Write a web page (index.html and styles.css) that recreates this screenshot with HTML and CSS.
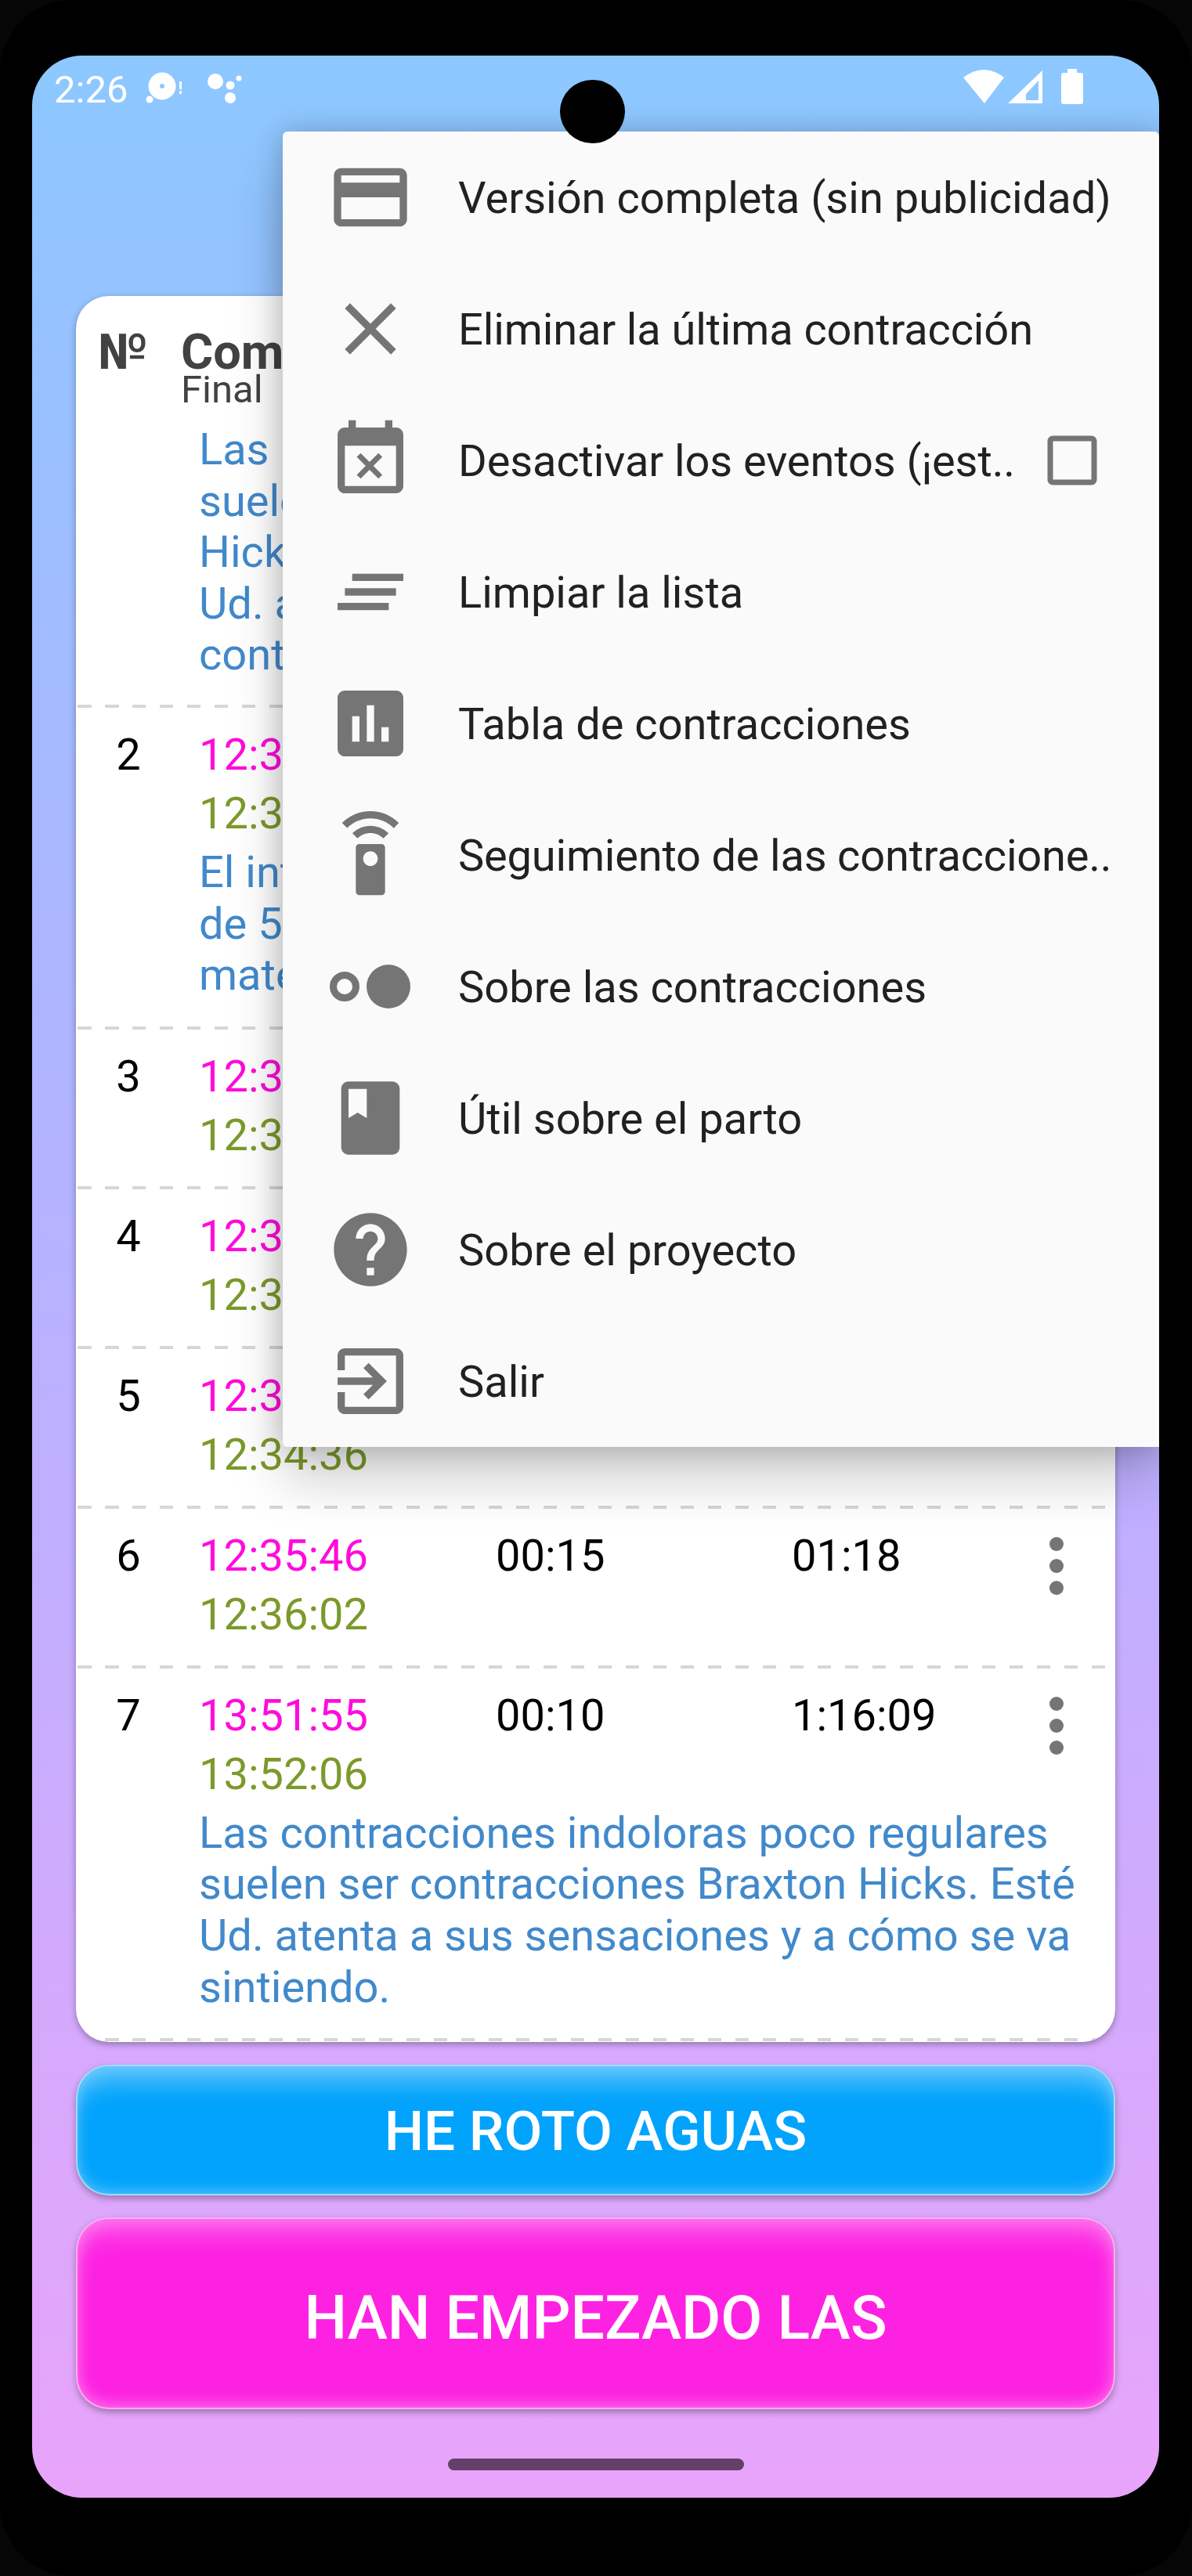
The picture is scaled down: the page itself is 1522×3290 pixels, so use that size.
FILE: index.html
```html
<!DOCTYPE html>
<html lang="es">
<head>
<meta charset="utf-8">
<title>Contracciones</title>
<link rel="stylesheet" href="styles.css">
</head>
<body>
<div class="phone">
  <main class="screen">
    <header class="status">
      <div class="status-left">
        <span class="clock">2:26</span>
        <svg class="status-apps" viewBox="0 0 140 60">
          <circle class="ring" cx="28" cy="30" r="10.25"/>
          <circle cx="12" cy="47" r="4.5"/>
          <rect x="50" y="24" width="3" height="10"/>
          <rect x="50" y="36" width="3" height="4"/>
          <circle cx="96" cy="24" r="10"/>
          <circle cx="115" cy="29" r="5.5"/>
          <circle cx="126" cy="20" r="3.5"/>
          <circle cx="115" cy="45" r="7"/>
        </svg>
      </div>
      <svg class="status-sys" viewBox="0 0 165 60">
        <path d="M5 19Q32-1 57 19L32 52Z"/>
        <path fill-rule="evenodd" d="M62 52L106 10V52ZM85 48H101V23L85 40Z"/>
        <path d="M138 8H150V13H155Q158 13 158 16V50Q158 53 155 53H133Q130 53 130 50V16Q130 13 133 13H138Z"/>
      </svg>
    </header>

    <section class="card">
      <div class="head">
        <div class="head-num">№</div>
        <div class="head-col">
          <div class="head-title">Comienzo</div>
          <div class="head-sub">Final</div>
        </div>
      </div>

      <div class="row row-lead">
        <p class="note">Las &nbsp;contracciones indoloras poco regulares<br>suelen ser contracciones Braxton<br>Hicks. Esté atenta a sus sensaciones<br>Ud. a cómo se va sintiendo entre<br>contracciones.</p>
      </div>

      <div class="row">
        <div class="num">2</div>
        <div class="times"><span class="start">12:30:14</span><span class="end">12:30:51</span></div>
        <div class="cell">00:37</div><div class="cell">04:12</div>
        <svg class="more" viewBox="0 0 84 84"><circle cx="42" cy="14" r="9"/><circle cx="42" cy="42" r="9"/><circle cx="42" cy="70" r="9"/></svg>
        <p class="note">El intervalo entre las contracciones es<br>de 5 minutos: vaya preparándose para la<br>maternidad.</p>
      </div>

      <div class="row">
        <div class="num">3</div>
        <div class="times"><span class="start">12:31:38</span><span class="end">12:31:59</span></div>
        <div class="cell">00:21</div><div class="cell">01:24</div>
        <svg class="more" viewBox="0 0 84 84"><circle cx="42" cy="14" r="9"/><circle cx="42" cy="42" r="9"/><circle cx="42" cy="70" r="9"/></svg>
      </div>

      <div class="row">
        <div class="num">4</div>
        <div class="times"><span class="start">12:32:56</span><span class="end">12:33:14</span></div>
        <div class="cell">00:18</div><div class="cell">01:18</div>
        <svg class="more" viewBox="0 0 84 84"><circle cx="42" cy="14" r="9"/><circle cx="42" cy="42" r="9"/><circle cx="42" cy="70" r="9"/></svg>
      </div>

      <div class="row">
        <div class="num">5</div>
        <div class="times"><span class="start">12:34:28</span><span class="end">12:34:36</span></div>
        <div class="cell">00:08</div><div class="cell">01:32</div>
        <svg class="more" viewBox="0 0 84 84"><circle cx="42" cy="14" r="9"/><circle cx="42" cy="42" r="9"/><circle cx="42" cy="70" r="9"/></svg>
      </div>

      <div class="row">
        <div class="num">6</div>
        <div class="times"><span class="start">12:35:46</span><span class="end">12:36:02</span></div>
        <div class="cell">00:15</div><div class="cell">01:18</div>
        <svg class="more" viewBox="0 0 84 84"><circle cx="42" cy="14" r="9"/><circle cx="42" cy="42" r="9"/><circle cx="42" cy="70" r="9"/></svg>
      </div>

      <div class="row">
        <div class="num">7</div>
        <div class="times"><span class="start">13:51:55</span><span class="end">13:52:06</span></div>
        <div class="cell">00:10</div><div class="cell">1:16:09</div>
        <svg class="more" viewBox="0 0 84 84"><circle cx="42" cy="14" r="9"/><circle cx="42" cy="42" r="9"/><circle cx="42" cy="70" r="9"/></svg>
        <p class="note">Las contracciones indoloras poco regulares suelen ser contracciones Braxton Hicks. Esté Ud. atenta a sus sensaciones y a cómo se va sintiendo.</p>
      </div>
    </section>

    <button class="btn btn-water">HE ROTO AGUAS</button>
    <button class="btn btn-start">HAN EMPEZADO LAS</button>
    <div class="nav"><span class="home-bar"></span></div>

    <nav class="menu">
      <div class="item">
        <svg class="ico" viewBox="0 0 24 24"><path d="M20 4H4c-1.11 0-1.99.89-1.99 2L2 18c0 1.11.89 2 2 2h16c1.11 0 2-.89 2-2V6c0-1.11-.89-2-2-2zm0 14H4v-6h16v6zm0-10H4V6h16v2z"/></svg>
        <span class="label">Versión completa (sin publicidad)</span>
      </div>
      <div class="item">
        <svg class="ico" viewBox="0 0 24 24"><path d="M19 6.41L17.59 5 12 10.59 6.41 5 5 6.41 10.59 12 5 17.59 6.41 19 12 13.41 17.59 19 19 17.59 13.41 12z"/></svg>
        <span class="label label-tight">Eliminar la última contracción</span>
      </div>
      <div class="item">
        <svg class="ico" viewBox="0 0 24 24"><path d="M9.31 17l2.44-2.44L14.19 17l1.06-1.06-2.44-2.44 2.44-2.44L14.19 10l-2.44 2.44L9.31 10l-1.06 1.06 2.44 2.44-2.44 2.44L9.31 17zM19 3h-1V1h-2v2H8V1H6v2H5c-1.11 0-1.99.9-1.99 2L3 19c0 1.1.89 2 2 2h14c1.1 0 2-.9 2-2V5c0-1.1-.9-2-2-2zm0 16H5V8h14v11z"/></svg>
        <span class="label label-short">Desactivar los eventos (¡est..</span>
        <svg class="check" viewBox="0 0 24 24"><path d="M19 5v14H5V5h14m0-2H5c-1.1 0-2 .9-2 2v14c0 1.1.9 2 2 2h14c1.1 0 2-.9 2-2V5c0-1.1-.9-2-2-2z"/></svg>
      </div>
      <div class="item">
        <svg class="ico" viewBox="0 0 24 24"><path d="M5 13h14v-2H5v2zm-2 4h14v-2H3v2zM7 7v2h14V7H7z"/></svg>
        <span class="label">Limpiar la lista</span>
      </div>
      <div class="item">
        <svg class="ico" viewBox="0 0 24 24"><path d="M19 3H5c-1.1 0-2 .9-2 2v14c0 1.1.9 2 2 2h14c1.1 0 2-.9 2-2V5c0-1.1-.9-2-2-2zM9 17H7v-7h2v7zm4 0h-2V7h2v10zm4 0h-2v-4h2v4z"/></svg>
        <span class="label">Tabla de contracciones</span>
      </div>
      <div class="item">
        <svg class="ico" viewBox="0 0 24 24"><path d="M15 9H9c-.55 0-1 .45-1 1v12c0 .55.45 1 1 1h6c.55 0 1-.45 1-1V10c0-.55-.45-1-1-1zm-3 6c-1.1 0-2-.9-2-2s.9-2 2-2 2 .9 2 2-.9 2-2 2zM7.05 6.05l1.41 1.41C9.37 6.56 10.62 6 12 6s2.63.56 3.54 1.46l1.41-1.41C15.68 4.78 13.93 4 12 4s-3.68.78-4.95 2.05zM12 0C8.96 0 6.21 1.23 4.22 3.22l1.41 1.41C7.26 3.01 9.51 2 12 2s4.74 1.01 6.36 2.64l1.41-1.41C17.79 1.23 15.04 0 12 0z"/></svg>
        <span class="label label-long">Seguimiento de las contraccione..</span>
      </div>
      <div class="item">
        <svg class="ico" viewBox="0 0 112 112"><circle class="dot-ring" cx="23" cy="56" r="14.5"/><circle cx="79" cy="56" r="28"/></svg>
        <span class="label">Sobre las contracciones</span>
      </div>
      <div class="item">
        <svg class="ico" viewBox="0 0 24 24"><path d="M18 2H6c-1.1 0-2 .9-2 2v16c0 1.1.9 2 2 2h12c1.1 0 2-.9 2-2V4c0-1.1-.9-2-2-2zM6 4h5v8l-2.5-1.5L6 12V4z"/></svg>
        <span class="label">Útil sobre el parto</span>
      </div>
      <div class="item">
        <svg class="ico" viewBox="0 0 24 24"><path d="M12 2C6.48 2 2 6.48 2 12s4.48 10 10 10 10-4.48 10-10S17.52 2 12 2zm1 17h-2v-2h2v2zm2.07-7.75l-.9.92C13.45 12.9 13 13.5 13 15h-2v-.5c0-1.1.45-2.1 1.17-2.83l1.24-1.26c.37-.36.59-.86.59-1.41 0-1.1-.9-2-2-2s-2 .9-2 2H8c0-2.21 1.79-4 4-4s4 1.79 4 4c0 .88-.36 1.68-.93 2.25z"/></svg>
        <span class="label">Sobre el proyecto</span>
      </div>
      <div class="item">
        <svg class="ico" viewBox="0 0 24 24"><path d="M10.09 15.59L11.5 17l5-5-5-5-1.41 1.41L12.67 11H3v2h9.67l-2.58 2.59zM19 3H5c-1.11 0-2 .9-2 2v4h2V5h14v14H5v-4H3v4c0 1.1.89 2 2 2h14c1.1 0 2-.9 2-2V5c0-1.1-.9-2-2-2z"/></svg>
        <span class="label">Salir</span>
      </div>
    </nav>

    <div class="camera"></div>
  </main>
</div>
</body>
</html>
```
FILE: styles.css
```css
* { box-sizing: border-box; }
html, body { margin: 0; padding: 0; background: #060606; }
body { width: 1522px; height: 3290px; overflow: hidden; font-family: Roboto, "Liberation Sans", sans-serif; }

.phone { width: 1522px; height: 3290px; padding: 71px 42px 100px 41px; background: #000; border-radius: 92px; }

.screen {
  position: relative;
  display: flex;
  flex-direction: column;
  height: 3119px;
  padding: 0 56px;
  overflow: hidden;
  border-radius: 64px;
  background: linear-gradient(180deg, #8cc8ff 0%, #a9b8ff 32%, #c0afff 60%, #e8a4fa 100%);
}

/* status bar */
.status {
  display: flex;
  justify-content: space-between;
  align-items: flex-start;
  height: 107px;
  margin: 0 -56px;
  padding: 9px 90px 0 28px;
  color: #fff;
}
.status-left { display: flex; align-items: flex-start; gap: 16px; }
.clock { margin-top: 6px; font-size: 49px; line-height: 57px; }
.status-apps { width: 140px; height: 60px; fill: #fff; }
.status-apps .ring { fill: none; stroke: #fff; stroke-width: 14.5; }
.status-sys { width: 165px; height: 60px; fill: #fff; }

/* list card */
.card {
  flex: none;
  margin-top: 200px;
  height: 2230px;
  overflow: hidden;
  border-radius: 42px;
  background: #fff;
  box-shadow: 0 3px 9px rgba(0, 0, 0, .32);
}
.head { display: flex; height: 164px; padding: 44px 0 0 28px; color: #424242; }
.head-num { width: 106px; font-size: 63px; font-weight: 700; line-height: 56px; }
.head-title { font-size: 63px; font-weight: 700; line-height: 56px; }
.head-sub { font-size: 49px; line-height: 40px; }

.row {
  display: grid;
  grid-template-columns: 157px 379px 378px 295.5px 84px 1fr;
  padding-top: 23px;
  font-size: 56px;
  line-height: 75px;
  color: #000;
}
.row::after {
  content: "";
  grid-column: 1 / -1;
  height: 4px;
  margin: 27px 12px 0 2px;
  background: repeating-linear-gradient(90deg, #d6d6d6 0, #d6d6d6 17.5px, transparent 17.5px, transparent 35px);
}
.row-lead { padding-top: 0; }
.row-lead .note { margin: 0 0 3px; }
.num { padding-right: 23px; text-align: center; }
.times { display: flex; flex-direction: column; }
.start { color: #ff0bdc; }
.end { color: #7b9a2a; }
.more { display: block; width: 84px; height: 84px; margin-top: 8px; fill: #757575; }
.note {
  grid-column: 2 / -1;
  margin: 5px 0 5px;
  padding-right: 30px;
  font-size: 56px;
  line-height: 65.6px;
  color: #4189cb;
}

/* buttons */
.btn {
  flex: none;
  display: block;
  width: 100%;
  margin: 29px 0 0;
  border: 2px solid rgba(255, 255, 255, .62);
  border-radius: 42px;
  font-family: inherit;
  font-weight: 500;
  color: #fff;
}
.btn-water {
  height: 167px;
  padding: 2px 0 0;
  font-size: 71px;
  background: #02a3fc;
  box-shadow: 0 4px 9px rgba(0, 0, 0, .3), inset 0 32px 30px -12px rgba(255, 255, 255, .36), inset 0 -14px 20px -10px rgba(255, 255, 255, .22), inset 0 0 18px rgba(255, 255, 255, .2);
}
.btn-start {
  height: 245px;
  margin-top: 28px;
  padding: 12px 0 0;
  font-size: 77px;
  background: #fd22e2;
  box-shadow: 0 4px 9px rgba(0, 0, 0, .3), inset 0 30px 30px -12px rgba(255, 255, 255, .28), inset 0 -12px 20px -10px rgba(255, 255, 255, .22), inset 0 0 22px rgba(255, 255, 255, .28);
}

.nav { flex: none; display: flex; justify-content: center; padding-top: 63px; }
.home-bar { width: 378px; height: 15px; border-radius: 8px; background: #624068; }

/* overflow menu */
.menu {
  position: absolute;
  top: 97px;
  left: 320px;
  right: 0;
  display: flex;
  flex-direction: column;
  border-radius: 6px 6px 0 6px;
  background: #fafafa;
  box-shadow: 0 40px 70px rgba(0, 0, 0, .2), 0 0 36px rgba(0, 0, 0, .2);
}
.item { display: flex; align-items: center; height: 168px; padding-left: 56px; gap: 56px; }
.ico { flex: none; width: 112px; height: 112px; fill: #757575; }
.dot-ring { fill: none; stroke: #757575; stroke-width: 9; }
.label { flex: 1; min-width: 0; padding-top: 2px; font-size: 56px; line-height: 66px; color: #212121; white-space: nowrap; }
.label-tight { letter-spacing: -.13px; }
.label-short { letter-spacing: -.1px; flex: none; width: 705px; }
.label-long { letter-spacing: -.2px; }
.check { flex: none; width: 84px; height: 84px; margin-left: -19px; fill: #757575; }

.camera {
  position: absolute;
  top: 31px;
  left: 674px;
  width: 83px;
  height: 81px;
  border-radius: 50%;
  background: #000;
}
```
